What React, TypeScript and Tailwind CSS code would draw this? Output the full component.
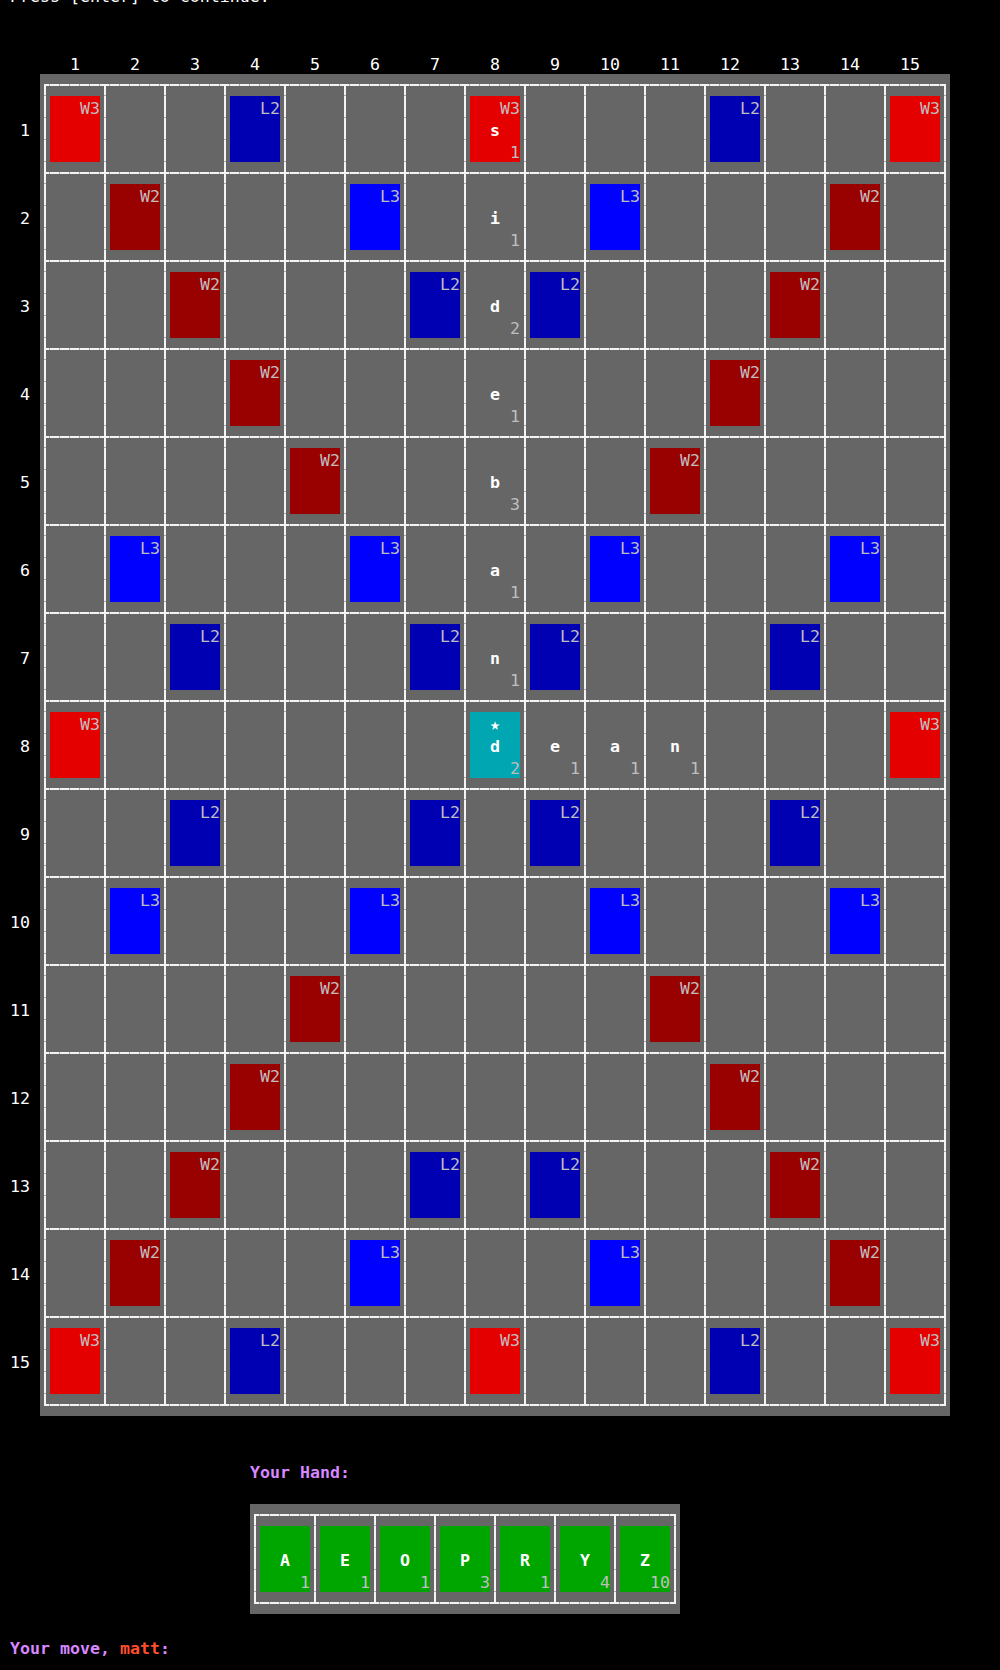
import React from 'react'

// board layout: T = W3, W = W2, D = L2, L = L3, S = start
const layout = [
  'T..D...T...D..T',
  '.W...L...L...W.',
  '..W...D.D...W..',
  '...W.......W...',
  '....W.....W....',
  '.L...L...L...L.',
  '..D...D.D...D..',
  'T......S......T',
  '..D...D.D...D..',
  '.L...L...L...L.',
  '....W.....W....',
  '...W.......W...',
  '..W...D.D...W..',
  '.W...L...L...W.',
  'T..D...T...D..T'
]

const squares: Record<string, { bg: string; label: string }> = {
  T: { bg: 'bg-[#e50000]', label: 'W3' },
  W: { bg: 'bg-[#990000]', label: 'W2' },
  D: { bg: 'bg-[#0000b2]', label: 'L2' },
  L: { bg: 'bg-[#0000ff]', label: 'L3' },
  S: { bg: 'bg-[#00a6b2]', label: '★' }
}

const placed: Record<string, [string, number]> = {
  '1,8': ['s', 1],
  '2,8': ['i', 1],
  '3,8': ['d', 2],
  '4,8': ['e', 1],
  '5,8': ['b', 3],
  '6,8': ['a', 1],
  '7,8': ['n', 1],
  '8,8': ['d', 2],
  '8,9': ['e', 1],
  '8,10': ['a', 1],
  '8,11': ['n', 1]
}

const hand: [string, number][] = [
  ['A', 1],
  ['E', 1],
  ['O', 1],
  ['P', 3],
  ['R', 1],
  ['Y', 4],
  ['Z', 10]
]

const lines =
  '[background:repeating-linear-gradient(90deg,transparent_0_5px,#a8a8a8_5px_6px,transparent_6px_10px),repeating-linear-gradient(180deg,transparent_0_11px,#a8a8a8_11px_12px,transparent_12px_22px),#f4f4f4]'

const Tile = ({
  bg,
  top,
  letter,
  points,
  star
}: {
  bg: string
  top?: string
  letter?: string
  points?: number
  star?: boolean
}) => (
  <div className={`flex h-[66px] w-[50px] flex-col ${bg}`}>
    <div
      className={`h-[22px] ${star ? 'text-center text-white' : 'text-right text-[#bfbfbf]'}`}>
      {top}
    </div>
    <div className="h-[22px] text-center font-bold text-white">{letter}</div>
    <div className="h-[22px] text-right text-[#bfbfbf]">{points}</div>
  </div>
)

const Cell = ({ children }: { children?: React.ReactNode }) => (
  <div className="h-[86px] w-[58px] bg-[#666666] px-[4px] py-[10px]">{children}</div>
)

export default function App() {
  return (
    <div
      className="min-h-[1670px] w-[1000px] overflow-hidden bg-black text-[16.6px] leading-[26px] text-white"
      style={{ fontFamily: '"DejaVu Sans Mono", "Liberation Mono", monospace' }}>
      <div className="-mt-[16px] h-[22px] pl-[10px]">Press [enter] to continue.</div>
      <div className="h-[46px]" />

      {/* column numbers */}
      <div className="flex h-[22px] pl-[40px]">
        {Array.from({ length: 15 }, (_, i) => (
          <div key={i} className={`w-[60px] ${i + 1 < 10 ? 'pl-[30px]' : 'pl-[20px]'}`}>
            {i + 1}
          </div>
        ))}
      </div>

      <div className="flex">
        {/* row numbers */}
        <div className="w-[40px] pt-[22px]">
          {layout.map((_, r) => (
            <div key={r} className="h-[88px] w-[30px] pt-[22px] text-right">
              {r + 1}
            </div>
          ))}
        </div>

        <div className="bg-[#666666] px-[4px] py-[10px]">
          <div className={`grid grid-cols-[repeat(15,58px)] gap-[2px] p-[2px] ${lines}`}>
            {layout.map((row, r) =>
              row.split('').map((ch, c) => {
                const sq = squares[ch]
                const tile = placed[`${r + 1},${c + 1}`]
                return (
                  <Cell key={`${r}-${c}`}>
                    {(sq || tile) && (
                      <Tile
                        bg={sq ? sq.bg : ''}
                        top={sq?.label}
                        star={ch === 'S'}
                        letter={tile?.[0]}
                        points={tile?.[1]}
                      />
                    )}
                  </Cell>
                )
              })
            )}
          </div>
        </div>
      </div>

      <div className="h-[44px]" />
      <div className="h-[22px] pl-[250px] font-bold text-[#d787ff]">Your Hand:</div>
      <div className="h-[22px]" />

      <div className="pl-[250px]">
        <div className="inline-block bg-[#666666] px-[4px] py-[10px] align-top">
          <div className={`flex gap-[2px] p-[2px] ${lines}`}>
            {hand.map(([l, p]) => (
              <Cell key={l}>
                <Tile bg="bg-[#00a600]" letter={l} points={p} />
              </Cell>
            ))}
          </div>
        </div>
      </div>

      <div className="h-[22px]" />
      <div className="h-[22px] pl-[10px] font-bold">
        <span className="text-[#d787ff]">Your move, </span>
        <span className="text-[#ff4f2f]">matt</span>
        <span className="text-[#d787ff]">:</span>
      </div>
    </div>
  )
}
